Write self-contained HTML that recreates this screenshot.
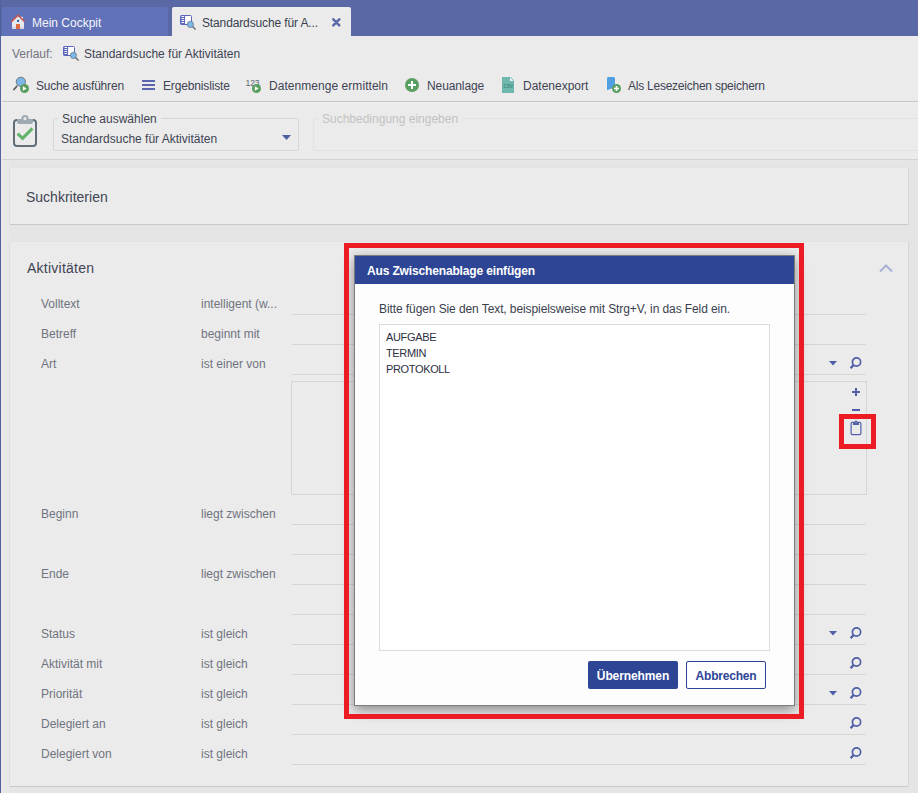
<!DOCTYPE html>
<html><head><meta charset="utf-8">
<style>
*{margin:0;padding:0;box-sizing:border-box}
html,body{width:918px;height:793px;overflow:hidden}
body{position:relative;background:#ebebeb;font-family:"Liberation Sans",sans-serif;font-size:12px;color:#3f4454}
.a{position:absolute;white-space:nowrap}
#tabbar{left:0;top:0;width:918px;height:36px;background:#5b68a6}
#lb{left:0;top:0;width:1px;height:793px;background:#51609f}
#lb2{left:1px;top:36px;width:1px;height:757px;background:#efede9}
.tab1{left:2px;top:7px;width:166px;height:29px;background:#6272b8;border-radius:2px 2px 0 0}
.tab2{left:172px;top:7px;width:179px;height:29px;background:#ebebeb;border-radius:2px 2px 0 0}
.t{line-height:14px}
.sep{height:1px;background:#d2d2d2}
#cont{left:2px;top:160px;width:916px;height:633px;background:#e5e5e5}
.panel{background:#ebebeb;box-shadow:0 1px 0 #c9c9c9, -1px 0 1px #dedede, 1px 0 1px #d8d8d8}
.lbl{color:#707480;font-size:12px}
.fl{left:292px;width:574px;height:1px;background:#d6d6d6}
.ico{position:absolute}
</style></head><body>
<div id="tabbar" class="a"></div>
<div class="a tab1"></div>
<div class="a tab2"></div>
<div id="lb" class="a"></div>
<div id="lb2" class="a"></div>

<!-- tab 1 -->
<svg class="ico" style="left:9px;top:13px" width="18" height="18" viewBox="0 0 18 18">
  <rect x="12" y="3.8" width="2" height="3.5" fill="#e6e7f0"/>
  <path d="M3 8.3 L9 2.7 L15 8.3 V16 H3 Z" fill="#e6e7f0"/>
  <rect x="3" y="13.9" width="12" height="2.1" fill="#d3d6e9"/>
  <path d="M2.4 8.6 L9.05 2.2 L15.6 8.6" fill="none" stroke="#c2584f" stroke-width="1.5"/>
  <rect x="8.05" y="6.9" width="2" height="2" fill="#1f5f9f"/>
  <rect x="7" y="11" width="4" height="5" fill="#dd6a3c"/>
</svg>
<div class="a t" style="left:32px;top:16px;color:#f4f5fb;font-size:12px">Mein Cockpit</div>

<!-- tab 2 -->
<svg class="ico" style="left:180px;top:14px" width="17" height="17" viewBox="0 0 17 17">
  <rect x="0.5" y="1.5" width="11" height="9" rx="1" fill="#fff" stroke="#5a66b8" stroke-width="1"/>
  <rect x="0.5" y="1.5" width="4.6" height="9" fill="#5a66b8"/>
  <rect x="1.5" y="2" width="2.6" height="1" fill="#fff"/><rect x="1.5" y="4" width="2.6" height="1" fill="#fff"/><rect x="1.5" y="6" width="2.6" height="1" fill="#fff"/><rect x="1.5" y="8" width="2.6" height="1" fill="#fff"/>
  <line x1="12.3" y1="12.3" x2="15.6" y2="15.6" stroke="#555c66" stroke-width="1.3"/>
  <circle cx="10.4" cy="10.4" r="3.1" fill="#7ab8e8" stroke="#6a6f75" stroke-width="0.7"/>
</svg>
<div class="a t" style="left:202px;top:16px;color:#3a3f4f;letter-spacing:-0.13px">Standardsuche für A...</div>
<svg class="ico" style="left:332px;top:18px" width="9" height="9" viewBox="0 0 9 9"><path d="M1.3 1.3 L7.3 7.3 M7.3 1.3 L1.3 7.3" stroke="#5a68a8" stroke-width="2.5" stroke-linecap="round"/></svg>

<!-- Verlauf -->
<div class="a t lbl" style="left:12px;top:47px">Verlauf:</div>
<svg class="ico" style="left:63px;top:45px" width="17" height="17" viewBox="0 0 17 17">
  <rect x="0.5" y="1.5" width="11" height="9" rx="1" fill="#fff" stroke="#5a66b8" stroke-width="1"/>
  <rect x="0.5" y="1.5" width="4.6" height="9" fill="#5a66b8"/>
  <rect x="1.5" y="2" width="2.6" height="1" fill="#fff"/><rect x="1.5" y="4" width="2.6" height="1" fill="#fff"/><rect x="1.5" y="6" width="2.6" height="1" fill="#fff"/><rect x="1.5" y="8" width="2.6" height="1" fill="#fff"/>
  <line x1="12.3" y1="12.3" x2="15.6" y2="15.6" stroke="#555c66" stroke-width="1.3"/>
  <circle cx="10.4" cy="10.4" r="3.1" fill="#7ab8e8" stroke="#6a6f75" stroke-width="0.7"/>
</svg>
<div class="a t" style="left:84px;top:47px">Standardsuche für Aktivitäten</div>

<!-- toolbar -->
<div class="a t" style="left:36px;top:79px;letter-spacing:-0.19px">Suche ausführen</div>
<div class="a t" style="left:163px;top:79px;letter-spacing:-0.15px">Ergebnisliste</div>
<div class="a t" style="left:269px;top:79px;letter-spacing:0.05px">Datenmenge ermitteln</div>
<div class="a t" style="left:427px;top:79px;letter-spacing:-0.1px">Neuanlage</div>
<div class="a t" style="left:523px;top:79px">Datenexport</div>
<div class="a t" style="left:628px;top:79px;letter-spacing:-0.24px">Als Lesezeichen speichern</div>


<!-- toolbar icons -->
<svg class="ico" style="left:12px;top:76px" width="18" height="18" viewBox="0 0 18 18">
  <line x1="4.8" y1="10.2" x2="1.9" y2="13.5" stroke="#4d5862" stroke-width="1.7" stroke-linecap="round"/>
  <circle cx="8.9" cy="5.8" r="4.6" fill="#7db7e8" stroke="#6a6f75" stroke-width="0.9"/>
  <circle cx="12.5" cy="12.5" r="4.5" fill="#5b9e60"/>
  <path d="M10.9 10.3 L14.6 12.5 L10.9 14.7 Z" fill="#fff"/>
</svg>
<svg class="ico" style="left:141px;top:80px" width="14" height="12" viewBox="0 0 14 12">
  <rect x="1" y="0" width="13" height="2" fill="#5a67b0"/>
  <rect x="1" y="4" width="13" height="2" fill="#5a67b0"/>
  <rect x="1" y="8" width="13" height="2" fill="#5a67b0"/>
</svg>
<svg class="ico" style="left:245px;top:78px" width="18" height="16" viewBox="0 0 18 16">
  <text x="0.6" y="8.2" font-family="Liberation Sans" font-size="8.6" fill="#5a6672" letter-spacing="-0.2">123</text>
  <circle cx="11.5" cy="10.5" r="4.5" fill="#5b9e60"/>
  <path d="M9.9 8.3 L13.6 10.5 L9.9 12.7 Z" fill="#fff"/>
</svg>
<svg class="ico" style="left:405px;top:78px" width="14" height="14" viewBox="0 0 14 14">
  <circle cx="7" cy="7" r="7" fill="#5a9e62"/>
  <rect x="3" y="6" width="8" height="2" fill="#fff"/>
  <rect x="6" y="3" width="2" height="8" fill="#fff"/>
</svg>
<svg class="ico" style="left:502px;top:77px" width="12" height="16" viewBox="0 0 12 16">
  <path d="M0 0 H8.5 L12 3.5 V16 H0 Z" fill="#6fb8ae"/>
  <path d="M8 0.5 V4 H11.5 Z" fill="#f4f4f4"/>
  <text x="1.6" y="11.2" font-family="Liberation Sans" font-weight="bold" font-size="4.6" fill="#3f8a7f">CSV</text>
</svg>
<svg class="ico" style="left:606px;top:76px" width="16" height="18" viewBox="0 0 16 18">
  <path d="M1 2 L2 1 H8 L9 2 V11 L5 12.8 L1 14.2 Z" fill="#519fe0"/>
  <circle cx="10.5" cy="12.5" r="4.5" fill="#5a9e62"/>
  <rect x="8" y="11.7" width="5" height="1.6" fill="#fff"/>
  <rect x="9.7" y="10" width="1.6" height="5" fill="#fff"/>
</svg>

<!-- search select -->
<svg class="ico" style="left:12px;top:113px" width="27" height="36" viewBox="0 0 27 36">
  <rect x="2" y="7" width="22" height="26" rx="3" fill="none" stroke="#5f6e78" stroke-width="2"/>
  <path d="M5 6 H21 V9 Q21 11 19 11 H7 Q5 11 5 9 Z" fill="#9eaab3"/>
  <circle cx="13" cy="5.6" r="3.6" fill="#9eaab3"/>
  <circle cx="13" cy="5.6" r="1.6" fill="#ebebeb"/>
  <path d="M5.6 20.6 L10.6 25.4 L20.4 15.4" fill="none" stroke="#63b46a" stroke-width="3"/>
</svg>
<div class="a" style="left:53px;top:118px;width:246px;height:33px;border:1px solid #d6d6d6;border-radius:2px"></div>
<div class="a t" style="left:58px;top:112px;padding:0 4px;background:#ebebeb">Suche auswählen</div>
<div class="a t" style="left:61px;top:132px">Standardsuche für Aktivitäten</div>
<svg class="ico" style="left:282px;top:135px" width="9" height="5" viewBox="0 0 9 5"><path d="M0 0 H9 L4.5 5 Z" fill="#4f5fa6"/></svg>
<div class="a" style="left:313px;top:118px;width:620px;height:33px;border:1px solid #e2e2e2;border-radius:2px"></div>
<div class="a t" style="left:318px;top:112px;padding:0 4px;background:#ebebeb;color:#c2c2c2">Suchbedingung eingeben</div>

<div class="a sep" style="left:2px;top:101px;width:916px;background:#c6c6c6"></div><div class="a sep" style="left:2px;top:102px;width:916px;background:#f1f1f1"></div>
<div class="a sep" style="left:2px;top:159px;width:916px"></div>
<div id="cont" class="a"></div><div class="a" style="left:2px;top:160px;width:7px;height:633px;background:#e8e8e8"></div>
<div class="a panel" style="left:10px;top:168px;width:898px;height:56px"></div>
<div class="a panel" style="left:10px;top:242px;width:898px;height:544px"></div>
<div class="a t" style="left:26px;top:189px;font-size:14px;line-height:16px">Suchkriterien</div>
<div class="a t" style="left:27px;top:260px;font-size:14px;line-height:16px;letter-spacing:0.25px">Aktivitäten</div>

<!-- rows -->
<div class="a t lbl" style="left:41px;top:297px">Volltext</div>
<div class="a t lbl" style="left:201px;top:297px">intelligent (w...</div>
<div class="a t lbl" style="left:41px;top:327px">Betreff</div>
<div class="a t lbl" style="left:201px;top:327px">beginnt mit</div>
<div class="a t lbl" style="left:41px;top:357px">Art</div>
<div class="a t lbl" style="left:201px;top:357px">ist einer von</div>
<svg class="ico" style="left:829px;top:361px" width="8" height="5" viewBox="0 0 8 5"><path d="M0 0 H8 L4 4.5 Z" fill="#4f5fa6"/></svg>
<svg class="ico" style="left:849px;top:357px" width="13" height="13" viewBox="0 0 13 13"><circle cx="7.5" cy="5" r="4.1" fill="none" stroke="#4f5fa6" stroke-width="1.7"/><line x1="4.6" y1="8" x2="1.6" y2="11.2" stroke="#4f5fa6" stroke-width="2.4"/></svg>
<div class="a t lbl" style="left:41px;top:507px">Beginn</div>
<div class="a t lbl" style="left:201px;top:507px">liegt zwischen</div>
<div class="a t lbl" style="left:41px;top:567px">Ende</div>
<div class="a t lbl" style="left:201px;top:567px">liegt zwischen</div>
<div class="a t lbl" style="left:41px;top:627px">Status</div>
<div class="a t lbl" style="left:201px;top:627px">ist gleich</div>
<svg class="ico" style="left:829px;top:631px" width="8" height="5" viewBox="0 0 8 5"><path d="M0 0 H8 L4 4.5 Z" fill="#4f5fa6"/></svg>
<svg class="ico" style="left:849px;top:627px" width="13" height="13" viewBox="0 0 13 13"><circle cx="7.5" cy="5" r="4.1" fill="none" stroke="#4f5fa6" stroke-width="1.7"/><line x1="4.6" y1="8" x2="1.6" y2="11.2" stroke="#4f5fa6" stroke-width="2.4"/></svg>
<div class="a t lbl" style="left:41px;top:657px">Aktivität mit</div>
<div class="a t lbl" style="left:201px;top:657px">ist gleich</div>
<svg class="ico" style="left:849px;top:657px" width="13" height="13" viewBox="0 0 13 13"><circle cx="7.5" cy="5" r="4.1" fill="none" stroke="#4f5fa6" stroke-width="1.7"/><line x1="4.6" y1="8" x2="1.6" y2="11.2" stroke="#4f5fa6" stroke-width="2.4"/></svg>
<div class="a t lbl" style="left:41px;top:687px">Priorität</div>
<div class="a t lbl" style="left:201px;top:687px">ist gleich</div>
<svg class="ico" style="left:829px;top:691px" width="8" height="5" viewBox="0 0 8 5"><path d="M0 0 H8 L4 4.5 Z" fill="#4f5fa6"/></svg>
<svg class="ico" style="left:849px;top:687px" width="13" height="13" viewBox="0 0 13 13"><circle cx="7.5" cy="5" r="4.1" fill="none" stroke="#4f5fa6" stroke-width="1.7"/><line x1="4.6" y1="8" x2="1.6" y2="11.2" stroke="#4f5fa6" stroke-width="2.4"/></svg>
<div class="a t lbl" style="left:41px;top:717px">Delegiert an</div>
<div class="a t lbl" style="left:201px;top:717px">ist gleich</div>
<svg class="ico" style="left:849px;top:717px" width="13" height="13" viewBox="0 0 13 13"><circle cx="7.5" cy="5" r="4.1" fill="none" stroke="#4f5fa6" stroke-width="1.7"/><line x1="4.6" y1="8" x2="1.6" y2="11.2" stroke="#4f5fa6" stroke-width="2.4"/></svg>
<div class="a t lbl" style="left:41px;top:747px">Delegiert von</div>
<div class="a t lbl" style="left:201px;top:747px">ist gleich</div>
<svg class="ico" style="left:849px;top:747px" width="13" height="13" viewBox="0 0 13 13"><circle cx="7.5" cy="5" r="4.1" fill="none" stroke="#4f5fa6" stroke-width="1.7"/><line x1="4.6" y1="8" x2="1.6" y2="11.2" stroke="#4f5fa6" stroke-width="2.4"/></svg>
<div class="a fl" style="top:314px"></div>
<div class="a fl" style="top:344px"></div>
<div class="a fl" style="top:374px"></div>
<div class="a fl" style="top:524px"></div>
<div class="a fl" style="top:554px"></div>
<div class="a fl" style="top:584px"></div>
<div class="a fl" style="top:614px"></div>
<div class="a fl" style="top:644px"></div>
<div class="a fl" style="top:674px"></div>
<div class="a fl" style="top:704px"></div>
<div class="a fl" style="top:734px"></div>
<div class="a fl" style="top:764px"></div>
<div class="a" style="left:291px;top:381px;width:576px;height:114px;border:1px solid #d6d6d6"></div>
<svg class="ico" style="left:852px;top:388px" width="8" height="8" viewBox="0 0 8 8"><rect x="0" y="3" width="8" height="2" fill="#4f5fa6"/><rect x="3" y="0" width="2" height="8" fill="#4f5fa6"/></svg>
<div class="a" style="left:852px;top:409px;width:8px;height:2px;background:#4f5fa6"></div>
<svg class="ico" style="left:850px;top:420px" width="12" height="16" viewBox="0 0 12 16"><rect x="1.1" y="2.4" width="9.8" height="12.2" rx="1.3" fill="none" stroke="#5262a8" stroke-width="1.2"/><path d="M3 2 H9 V5 H3 Z" fill="#5262a8"/><circle cx="6" cy="1.9" r="1.5" fill="#5262a8"/><circle cx="6" cy="2.6" r="0.7" fill="#8e98c8"/></svg>
<div class="a" style="left:839px;top:414px;width:37px;height:35px;border:5px solid #ed1c24"></div>
<svg class="ico" style="left:879px;top:263px" width="14" height="10" viewBox="0 0 14 10"><path d="M1 8.5 L7 2.5 L13 8.5" fill="none" stroke="#a8b0d4" stroke-width="2"/></svg>

<!-- dialog -->
<div class="a" style="left:354px;top:255px;width:441px;height:451px;background:#fdfdfd;border:1px solid #7d7d7d;box-shadow:0 4px 12px rgba(0,0,0,0.42)"></div>
<div class="a" style="left:355px;top:256px;width:439px;height:28px;background:#2e4595"></div>
<div class="a t" style="left:367px;top:264px;color:#fff;font-weight:bold;letter-spacing:-0.15px">Aus Zwischenablage einfügen</div>
<div class="a t" style="left:379px;top:302px;color:#3a3f4f;letter-spacing:-0.09px">Bitte fügen Sie den Text, beispielsweise mit Strg+V, in das Feld ein.</div>
<div class="a" style="left:379px;top:324px;width:391px;height:327px;border:1px solid #dcdcdc;background:#fff"></div>
<div class="a" style="left:386px;top:328.5px;font-size:11px;line-height:16px;color:#2b3040;letter-spacing:-0.35px">AUFGABE<br>TERMIN<br>PROTOKOLL</div>
<div class="a" style="left:588px;top:661px;width:90px;height:28px;background:#2e4596;border-radius:2px;color:#fff;font-weight:bold;text-align:center;line-height:31px;letter-spacing:-0.1px">Übernehmen</div>
<div class="a" style="left:686px;top:661px;width:80px;height:28px;background:#fff;border:1px solid #2e4596;border-radius:2px;color:#2e4596;font-weight:bold;text-align:center;line-height:28px;letter-spacing:-0.2px">Abbrechen</div>

<div class="a" style="left:344px;top:243px;width:460px;height:476px;border:5px solid #ed1c24"></div>
</body></html>
